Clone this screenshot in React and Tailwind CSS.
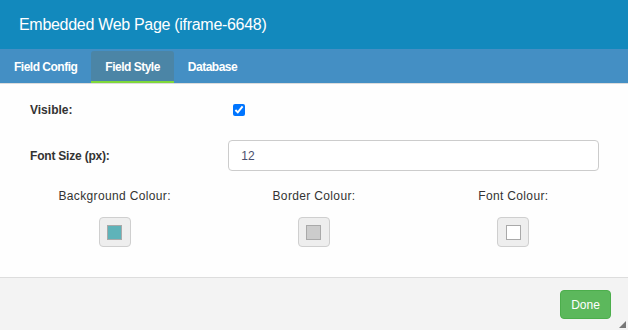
import React, { useState } from 'react';

const tabs = ['Field Config', 'Field Style', 'Database'];

const swatches = [
    { label: 'Background Colour:', color: '#5fb3b9' },
    { label: 'Border Colour:', color: '#cccccc' },
    { label: 'Font Colour:', color: '#ffffff' },
];

const App = () => {
    const [activeTab, setActiveTab] = useState('Field Style');
    const [visible, setVisible] = useState(true);
    const [fontSize, setFontSize] = useState('12');

    return (
        <div className="w-[628px] h-[330px] flex flex-col bg-white overflow-hidden relative font-['Liberation_Sans',Arial,sans-serif]">
            <header className="h-[49px] bg-[#1289bd] flex items-center pl-[19px]">
                <h1 className="text-[16px] tracking-[-0.3px] text-white leading-none">Embedded Web Page (iframe-6648)</h1>
            </header>

            <nav className="h-[35px] bg-[#448fc4] border-b border-[#dcdcdc] flex items-end">
                {tabs.map((tab) => (
                    <button
                        key={tab}
                        onClick={() => setActiveTab(tab)}
                        className={`h-[32px] px-[14px] text-[12px] tracking-[-0.5px] font-bold text-white leading-none flex items-center rounded-t-[3px] ${
                            activeTab === tab ? 'bg-[#4b85a6] border-b-2 border-[#7fd83a] pt-[1px]' : 'border-b-2 border-transparent pt-[1px]'
                        }`}
                    >
                        {tab}
                    </button>
                ))}
            </nav>

            <main className="flex-1 bg-[#fefefe] px-[15px] pt-[14px] text-[#333] text-[12px]">
                <div className="grid grid-cols-3 h-[24px] items-center">
                    <label className="px-[15px] font-bold">Visible:</label>
                    <div className="col-span-2 px-[19px] flex items-center">
                        <input
                            type="checkbox"
                            checked={visible}
                            onChange={(e) => setVisible(e.target.checked)}
                            className="w-[12px] h-[12px] m-0 accent-[#0075ff]"
                        />
                    </div>
                </div>

                <div className="grid grid-cols-3 mt-[18px] items-center">
                    <label className="px-[15px] font-bold tracking-[-0.2px]">Font Size (px):</label>
                    <div className="col-span-2 pl-[14px] pr-[14px]">
                        <input
                            type="text"
                            value={fontSize}
                            onChange={(e) => setFontSize(e.target.value)}
                            className="w-full h-[31px] border border-[#cccccc] rounded-[4px] px-[12px] text-[12px] text-[#4b4f6e] outline-none bg-white"
                        />
                    </div>
                </div>

                <div className="grid grid-cols-3 mt-[17px]">
                    {swatches.map((s) => (
                        <div key={s.label} className="flex flex-col items-center">
                            <span className="leading-[16px] tracking-[0.35px]">{s.label}</span>
                            <button className="mt-[13px] w-[32px] h-[30px] bg-[#eeeeee] border border-[#cfcfcf] rounded-[4px] flex items-center justify-center">
                                <span className="w-[15px] h-[15px] border border-[#a9a9a9]" style={{ backgroundColor: s.color }} />
                            </button>
                        </div>
                    ))}
                </div>
            </main>

            <footer className="h-[53px] bg-[#f3f3f3] border-t border-[#dddddd] flex items-center justify-end pr-[17px]">
                <button className="w-[51px] h-[29px] bg-[#5cb85c] border border-[#4cae4c] rounded-[4px] text-white text-[12px] mt-[1px]">
                    Done
                </button>
            </footer>

            <svg className="absolute right-[2px] bottom-[2px]" width="7" height="7" viewBox="0 0 7 7">
                <polygon points="7,0 7,7 0,7" fill="#777" />
            </svg>
        </div>
    );
};

export default App;
